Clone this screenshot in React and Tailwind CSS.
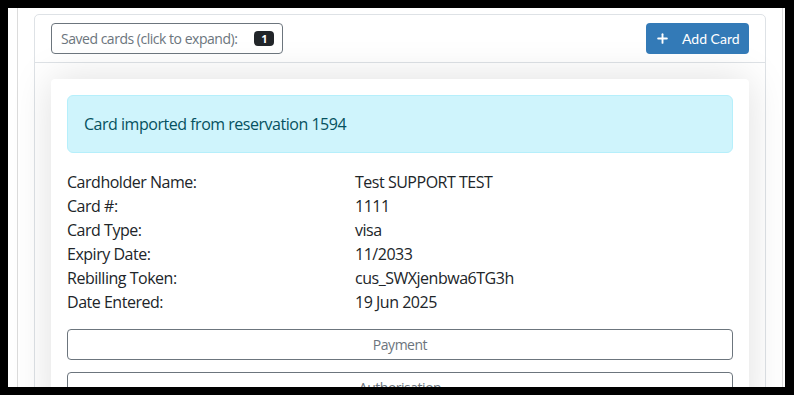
import { Plus } from 'lucide-react';

const details = [
  ['Cardholder Name:', 'Test SUPPORT TEST'],
  ['Card #:', '1111'],
  ['Card Type:', 'visa'],
  ['Expiry Date:', '11/2033'],
  ['Rebilling Token:', 'cus_SWXjenbwa6TG3h'],
  ['Date Entered:', '19 Jun 2025'],
];

const App = () => {
  return (
    <div className="w-[794px] h-[395px] bg-black pt-[8px] pl-[8px] pr-[9px] pb-[8px] overflow-hidden">
      <div
        className="h-full bg-white overflow-hidden text-[#212529] tracking-[-0.03em]"
        style={{ fontFamily: '"Open Sans", "Noto Sans", sans-serif' }}
      >
        <div className="ml-[9px] w-[766px] h-full border-x border-[#dcdcdc] px-4 pt-[6px]">
          <div className="border border-[#dee2e6] rounded-t-[5px] h-[400px]">
            <div className="flex items-center justify-between px-4 h-[48px] border-b border-[#dee2e6]">
              <button className="flex items-center h-[31px] pl-[9px] pr-[8px] border border-[#6c757d] rounded-[4px] text-[14px] text-[#6c757d]">
                Saved cards (click to expand):
                <span className="ml-[17px] bg-[#212529] text-white text-[11px] font-bold rounded-[4px] w-[20px] h-[15px] flex items-center justify-center leading-none tracking-normal">
                  1
                </span>
              </button>
              <button
                className="flex items-center h-[31px] w-[103px] pl-[9px] bg-[#337ab7] rounded-[4px] text-white text-[14px] tracking-normal"
                style={{ fontFamily: 'Lato, sans-serif' }}
              >
                <Plus size={15} strokeWidth={3} />
                <span className="ml-[12px]">Add Card</span>
              </button>
            </div>
            <div className="p-4">
              <div className="bg-white rounded-[4px] shadow-[0_0_40px_rgba(0,0,0,0.13)] p-4">
                <div className="bg-[#cff4fc] border border-[#b6effb] rounded-[6px] text-[#055160] px-4 py-4 text-[16px] leading-6">
                  Card imported from reservation 1594
                </div>
                <div className="mt-[17px] text-[16px] leading-6">
                  {details.map(([label, value]) => (
                    <div key={label} className="grid grid-cols-[288px_1fr]">
                      <div>{label}</div>
                      <div>{value}</div>
                    </div>
                  ))}
                </div>
                <button className="mt-[15px] w-full h-[31px] border border-[#6c757d] rounded-[4px] text-[14px] text-[#6c757d]">
                  Payment
                </button>
                <button className="mt-[12px] w-full h-[31px] border border-[#6c757d] rounded-[4px] text-[14px] text-[#6c757d]">
                  Authorisation
                </button>
              </div>
            </div>
          </div>
        </div>
      </div>
    </div>
  );
};

export default App;
